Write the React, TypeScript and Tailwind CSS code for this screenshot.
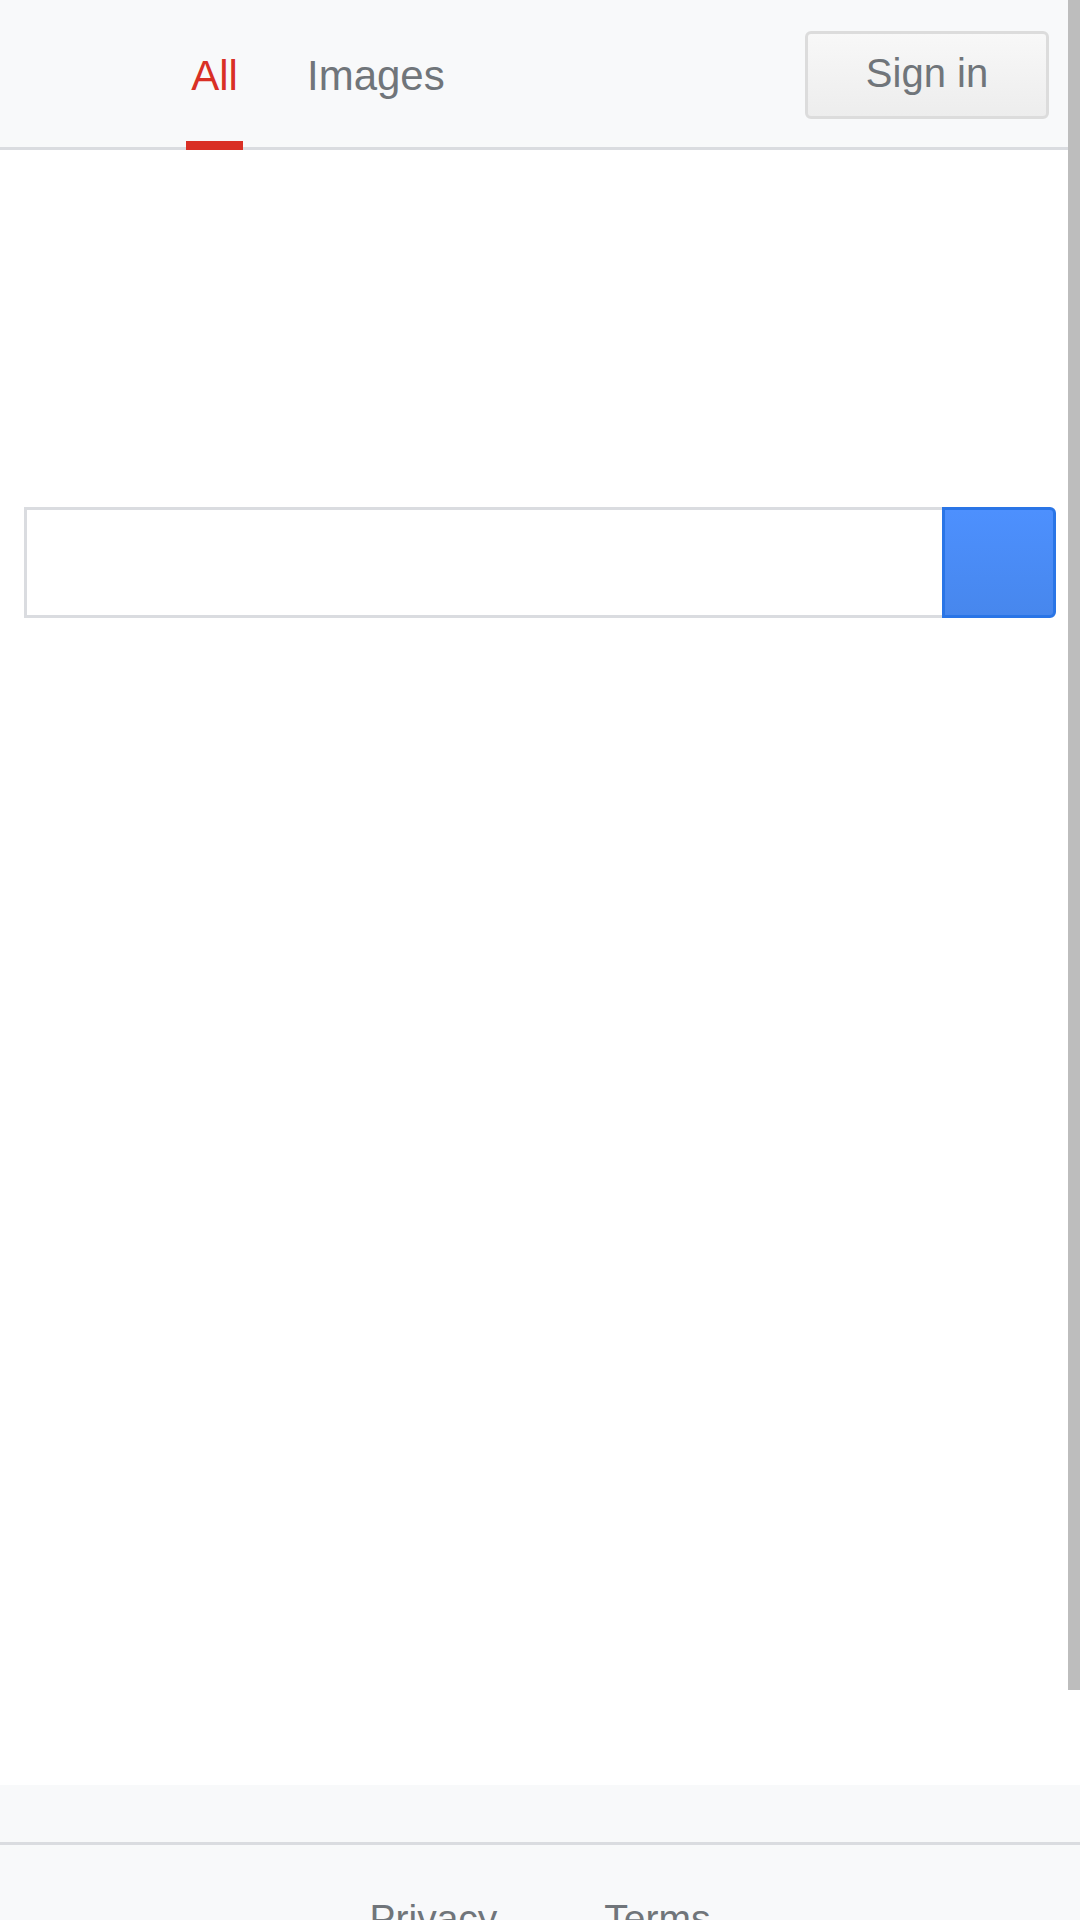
export default function App() {
  return (
    <div
      className="relative h-[1920px] overflow-hidden bg-white"
      style={{ fontFamily: '"Liberation Sans", Arial, sans-serif' }}
    >
      <header className="flex h-[150px] border-b-[3px] border-[#dadce0] bg-[#f8f9fa]">
        <nav className="flex pl-[186px]">
          <a className="relative flex w-[57px] justify-center pt-[55px] text-[42px] leading-[42px] text-[#d93025]">
            All
            <span className="absolute bottom-[-3px] left-0 right-0 h-[9px] bg-[#d93025]" />
          </a>
          <a className="ml-[64px] flex justify-center pt-[55px] text-[42px] leading-[42px] text-[#70757a]">
            Images
          </a>
        </nav>
        <div className="ml-auto mr-[31px] pt-[31px]">
          <button className="flex h-[88px] w-[244px] items-center justify-center rounded-[6px] border-[3px] border-[#dcdcdc] bg-gradient-to-b from-[#f8f8f8] to-[#ededed] pb-[4px] text-[40px] leading-[40px] text-[#70757a]">
            Sign in
          </button>
        </div>
      </header>

      <main className="h-[1635px] pt-[357px]">
        <form className="flex h-[111px] pl-[24px] pr-[24px]">
          <input
            className="h-full flex-1 border-[3px] border-r-0 border-[#dadce0] bg-white px-4 text-[42px] outline-none"
            aria-label="Search"
          />
          <button
            type="submit"
            className="h-full w-[114px] rounded-r-[6px] border-[3px] border-[#2a75e6] bg-gradient-to-b from-[#4d90fe] to-[#4787ed]"
            aria-label="Search"
          />
        </form>
      </main>

      <footer className="bg-[#f8f9fa]">
        <div className="h-[60px] border-b-[3px] border-[#dadce0]" />
        <div className="flex justify-center gap-[107px] pt-[54px] text-[39px] leading-[39px] text-[#70757a]">
          <a>Privacy</a>
          <a>Terms</a>
        </div>
      </footer>

      <div className="absolute right-0 top-0 h-[1690px] w-[12px] bg-[#bdbdbd]" />
    </div>
  )
}
